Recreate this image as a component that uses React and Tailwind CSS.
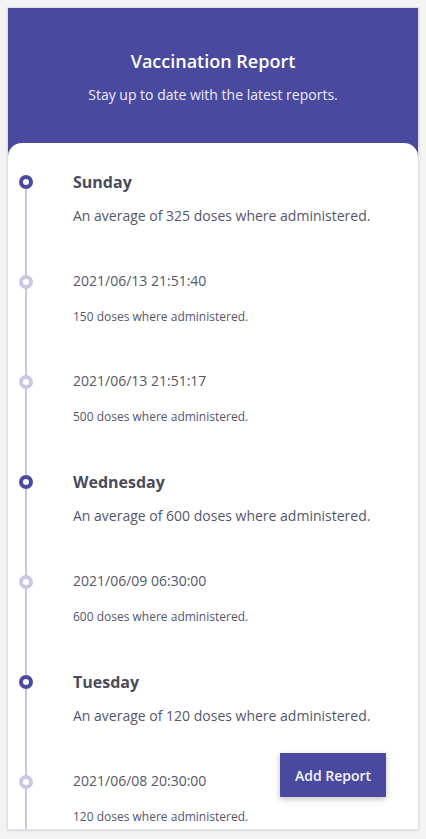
import React from "react";

const items = [
  { type: "day", title: "Sunday", text: "An average of 325 doses where administered." },
  { type: "entry", title: "2021/06/13 21:51:40", text: "150 doses where administered." },
  { type: "entry", title: "2021/06/13 21:51:17", text: "500 doses where administered." },
  { type: "day", title: "Wednesday", text: "An average of 600 doses where administered." },
  { type: "entry", title: "2021/06/09 06:30:00", text: "600 doses where administered." },
  { type: "day", title: "Tuesday", text: "An average of 120 doses where administered." },
  { type: "entry", title: "2021/06/08 20:30:00", text: "120 doses where administered." },
];

function Item({ item, first }) {
  const day = item.type === "day";
  return (
    <div className="flex h-[100px] shrink-0">
      <div className="relative w-[65px] shrink-0">
        <div
          className={
            first
              ? "absolute left-[17px] top-[39px] bottom-0 w-[2px] bg-[#c9c8e3]"
              : "absolute left-[17px] top-0 bottom-0 w-[2px] bg-[#c9c8e3]"
          }
        />
        <div
          className={
            day
              ? "absolute left-[11px] top-[32px] h-[14px] w-[14px] rounded-full border-[4px] border-[#4a49a0] bg-white"
              : "absolute left-[11px] top-[32px] h-[14px] w-[14px] rounded-full border-[4px] border-[#c9c8e3] bg-white"
          }
        />
      </div>
      <div className="flex flex-col pt-[28px]">
        {day ? (
          <>
            <div className="text-[16px] leading-[22px] font-bold text-[#4a4c5a]">{item.title}</div>
            <div className="mt-[13px] text-[14px] leading-[20px] text-[#55566a]">{item.text}</div>
          </>
        ) : (
          <>
            <div className="text-[14px] leading-[20px] text-[#55566a]">{item.title}</div>
            <div className="mt-[18px] text-[12px] leading-[16px] text-[#55566a]">{item.text}</div>
          </>
        )}
      </div>
    </div>
  );
}

export default function App() {
  return (
    <div
      className="min-h-[839px] bg-[#f4f4f4] p-[7px]"
      style={{ fontFamily: '"Open Sans", "Noto Sans", sans-serif' }}
    >
      <div className="relative flex h-[823px] flex-col overflow-hidden border border-[#e2e2e2] bg-[#4a49a0] shadow-sm">
        <div className="flex h-[135px] shrink-0 flex-col items-center pt-[40px] text-white">
          <div className="text-[18px] leading-[26px] font-semibold">Vaccination Report</div>
          <div className="mt-[11px] text-[14px] leading-[20px] text-[#ececf7]">
            Stay up to date with the latest reports.
          </div>
        </div>
        <div className="flex flex-1 flex-col overflow-hidden rounded-t-[14px] bg-white">
          {items.map((it, i) => (
            <Item key={i} item={it} first={i === 0} />
          ))}
        </div>
        <button className="absolute right-[32px] bottom-[32px] h-[44px] w-[106px] bg-[#4a49a0] text-[14px] font-semibold text-[#f4f4fb] shadow-[0_2px_6px_rgba(0,0,0,0.25)]">
          Add Report
        </button>
      </div>
    </div>
  );
}
